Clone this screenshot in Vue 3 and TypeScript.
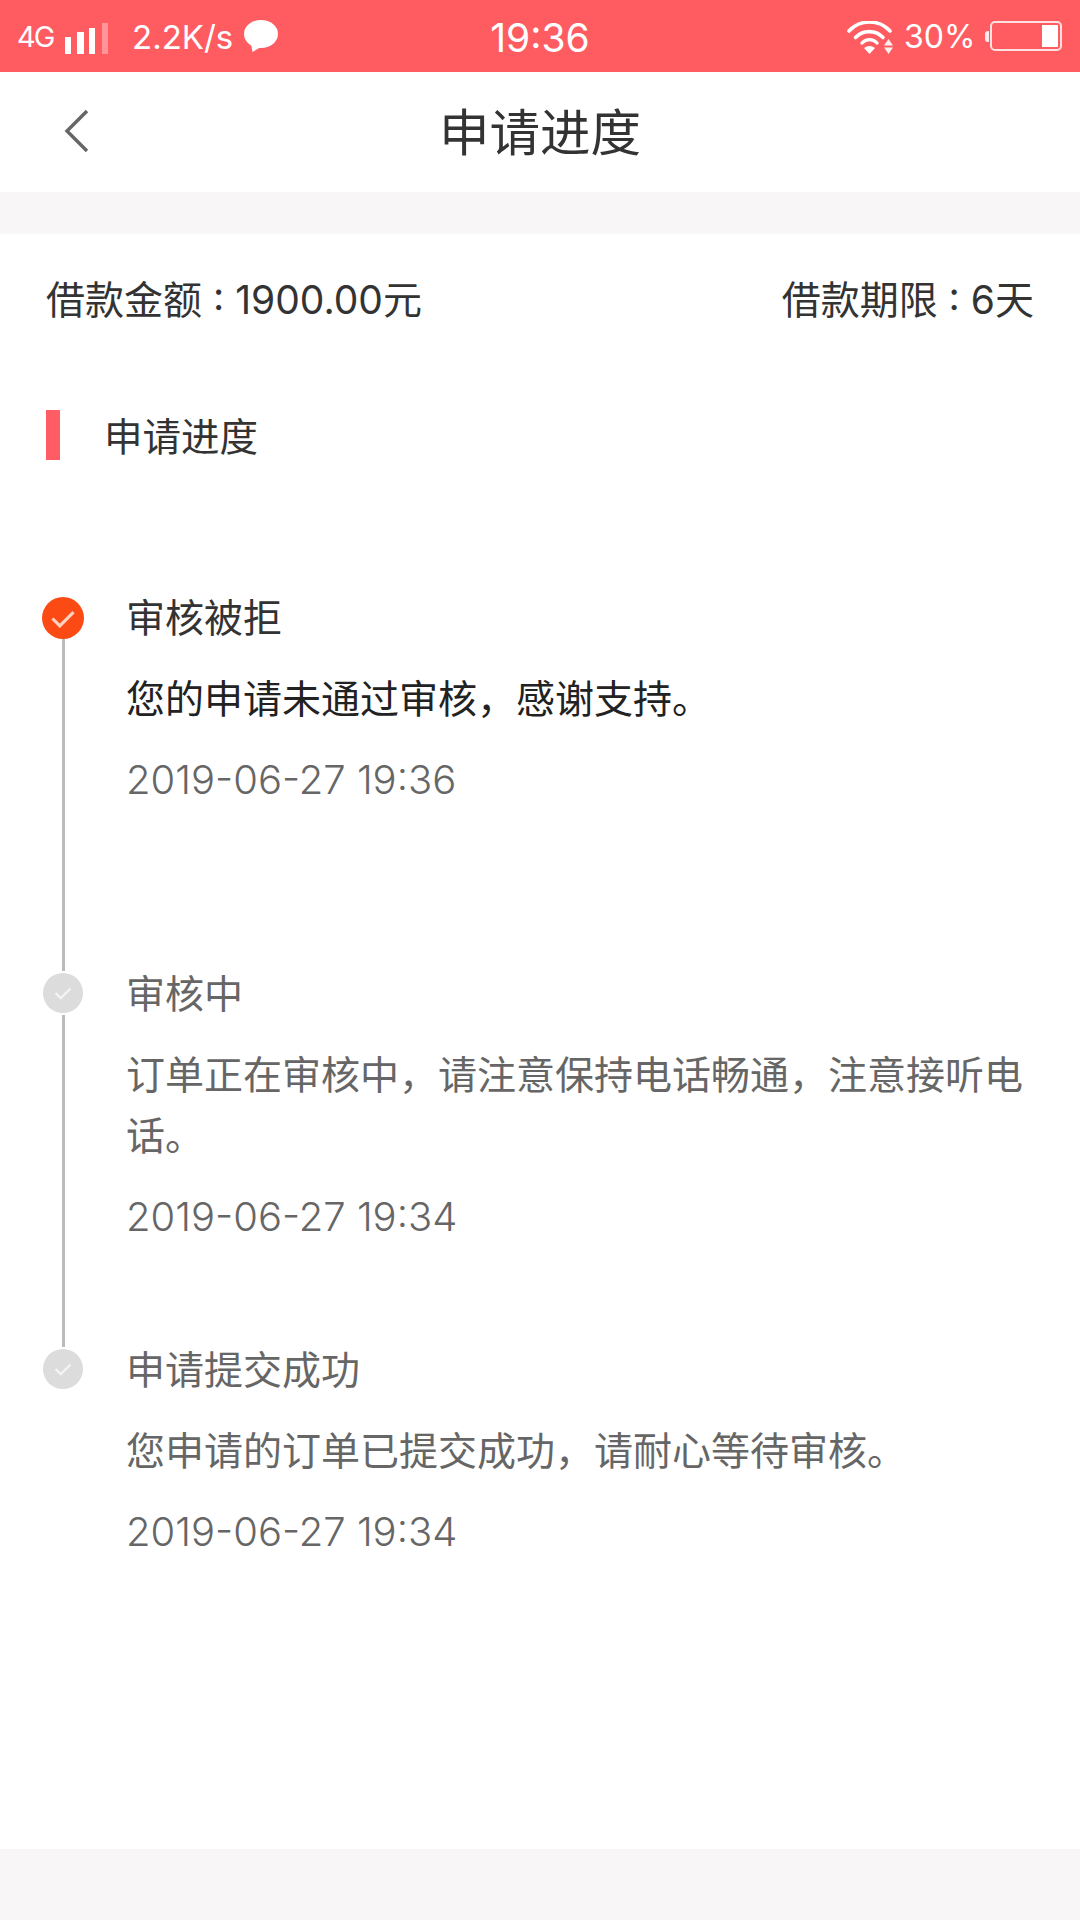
<script setup lang="ts">
interface Step { title: string; desc: string; time: string; active: boolean; last: boolean }
const steps: Step[] = [
  { title: '审核被拒', desc: '您的申请未通过审核\uFF0C感谢支持。', time: '2019-06-27 19:36', active: true, last: false },
  { title: '审核中', desc: '订单正在审核中\uFF0C请注意保持电话畅通\uFF0C注意接听电话。', time: '2019-06-27 19:34', active: false, last: false },
  { title: '申请提交成功', desc: '您申请的订单已提交成功\uFF0C请耐心等待审核。', time: '2019-06-27 19:34', active: false, last: true },
]
</script>

<template>
  <div class="page">
    <header class="status">
      <div class="status-left">
        <span class="net">4G</span>
        <svg class="signal" width="43" height="31" viewBox="0 0 43 31">
          <rect x="0" y="14" width="6" height="17" fill="#fff" />
          <rect x="12" y="9" width="7" height="22" fill="#fff" />
          <rect x="24" y="5" width="6" height="26" fill="#fff" />
          <rect x="37" y="0" width="6" height="31" fill="#fff" fill-opacity=".35" />
        </svg>
        <span class="speed">2.2K/s</span>
        <svg class="bubble" width="34" height="32" viewBox="0 0 34 32">
          <ellipse cx="17" cy="14" rx="17" ry="14" fill="#fff" />
          <path d="M7 24 L8.5 32 L17 27 Z" fill="#fff" />
        </svg>
      </div>
      <span class="clock">19:36</span>
      <div class="status-right">
        <svg class="wifi" width="47" height="33" viewBox="0 0 47 33">
          <path d="M2 10 A 28 28 0 0 1 43 10" fill="none" stroke="#fff" stroke-width="3.6" stroke-linecap="round" />
          <path d="M8.5 16.5 A 19 19 0 0 1 36 16.5" fill="none" stroke="#fff" stroke-width="3.6" stroke-linecap="round" />
          <path d="M15 22 A 10 10 0 0 1 30 22" fill="none" stroke="#fff" stroke-width="3.4" stroke-linecap="round" />
          <path d="M17 27 Q22.5 23 28 27 L22.5 33 Z" fill="#fff" />
          <path d="M41.5 18 L46 24.5 H37 Z M37 26.5 H46 L41.5 33 Z" fill="#fff" fill-opacity=".9" />
        </svg>
        <span class="percent">30%</span>
        <span class="nub"></span>
        <span class="battery"><span class="charge"></span></span>
      </div>
    </header>

    <nav class="nav">
      <svg class="back" width="26" height="44" viewBox="0 0 26 44">
        <path d="M23 2 L3 22 L23 42" fill="none" stroke="#666" stroke-width="3.4" />
      </svg>
      <h1 class="nav-title">申请进度</h1>
    </nav>

    <div class="gap"></div>

    <main class="body">
      <div class="info">
        <span>借款金额 : 1900.00元</span>
        <span>借款期限 : 6天</span>
      </div>

      <div class="section">
        <span class="bar"></span>
        <span class="section-title">申请进度</span>
      </div>

      <ol class="timeline">
        <li v-for="s in steps" :key="s.title + s.time" class="step" :class="{ on: s.active }">
          <div class="rail">
            <span class="dot">
              <svg :width="s.active ? 26 : 18" :height="s.active ? 19 : 14" viewBox="0 0 24 18">
                <path d="M2 9 L9 16 L22 3" fill="none" :stroke="s.active ? '#ffd2bf' : '#f4f4f4'" stroke-width="3" />
              </svg>
            </span>
            <span v-if="!s.last" class="line"></span>
          </div>
          <div class="content">
            <div class="step-title">{{ s.title }}</div>
            <div class="step-desc">{{ s.desc }}</div>
            <div class="step-time">{{ s.time }}</div>
          </div>
        </li>
      </ol>
    </main>

    <footer class="foot"></footer>
  </div>
</template>

<style>
html, body { margin: 0; background: #fff; }
</style>

<style scoped>
.page {
  width: 1080px;
  height: 1920px;
  display: flex;
  flex-direction: column;
  background: #fff;
  font-family: Inter, "Noto Sans CJK SC", sans-serif;
  overflow: hidden;
}
.status {
  position: relative;
  height: 72px;
  flex: none;
  background: #ff5c62;
  color: #fff;
  display: flex;
  align-items: center;
  justify-content: space-between;
  padding: 0 18px 0 17px;
  box-sizing: border-box;
}
.status-left, .status-right { display: flex; align-items: center; }
.net { font-size: 29px; letter-spacing: -2px; line-height: 36px; margin-top: 2px; width: 37px; white-space: nowrap; }
.signal { margin-left: 11px; margin-top: 4px; }
.speed { font-size: 33px; line-height: 40px; margin-left: 24px; width: 102px; white-space: nowrap; margin-top: 2px; }
.bubble { margin-left: 10px; }
.clock {
  position: absolute;
  left: 0;
  right: 0;
  text-align: center;
  font-size: 39px;
  line-height: 72px;
  top: 2px;
}
.wifi { margin-right: 10px; margin-top: 2px; }
.percent { font-size: 32px; line-height: 40px; width: 71px; white-space: nowrap; margin-top: 2px; }
.nub { width: 4px; height: 11px; background: #fff; opacity: .85; border-radius: 3px 0 0 3px; margin-left: 10px; margin-right: 1px; }
.battery {
  width: 72px;
  height: 30px;
  box-sizing: border-box;
  border: 2px solid #ffe0e0;
  border-radius: 5px;
  display: flex;
  justify-content: flex-end;
  padding: 2px;
}
.charge { width: 16px; background: #fff; }
.nav {
  position: relative;
  height: 120px;
  flex: none;
  display: flex;
  align-items: center;
  justify-content: center;
}
.back { position: absolute; left: 64px; top: 37px; }
.nav-title { margin: 0; font-size: 50.5px; font-weight: 400; color: #333; line-height: 64px; margin-top: 2px; }
.gap { height: 42px; flex: none; background: #f8f6f6; }
.body { flex: 1; padding: 0 46px; box-sizing: border-box; }
.info {
  display: flex;
  justify-content: space-between;
  padding-top: 40px;
  font-size: 39px;
  line-height: 52px;
  color: #333;
}
.section {
  display: flex;
  align-items: center;
  margin-top: 84px;
  height: 50px;
}
.bar { width: 14px; height: 50px; background: #ff5c66; }
.section-title { margin-left: 44px; font-size: 38.5px; line-height: 50px; color: #333; padding-top: 4px; }
.timeline { list-style: none; margin: 137px 0 0; padding: 0; }
.step { display: flex; min-height: 376px; }
.rail {
  width: 42px;
  margin-left: -4px;
  flex: none;
  display: flex;
  flex-direction: column;
  align-items: center;
}
.dot {
  width: 40px;
  height: 40px;
  flex: none;
  border-radius: 50%;
  background: #dcdcdc;
  display: flex;
  align-items: center;
  justify-content: center;
}
.on .dot { width: 42px; height: 42px; background: #fb4a14; }
.line { width: 3px; flex: 1; background: #bbb; margin-top: 2px; margin-bottom: 2px; }
.on .line { margin-top: 0; }
.content { margin-left: 42px; width: 910px; color: #666; }
.step-title { font-size: 39px; line-height: 50px; margin-top: -4px; }
.step-desc { font-size: 39px; line-height: 61px; margin-top: 25px; }
.step-time { font-size: 40px; font-weight: 300; line-height: 50px; margin-top: 26px; }
.on .content { color: #333; }
.on .step-desc { color: #222; }
.on .step-time { color: #666; }
.foot { height: 71px; flex: none; background: #f8f6f6; }
</style>
